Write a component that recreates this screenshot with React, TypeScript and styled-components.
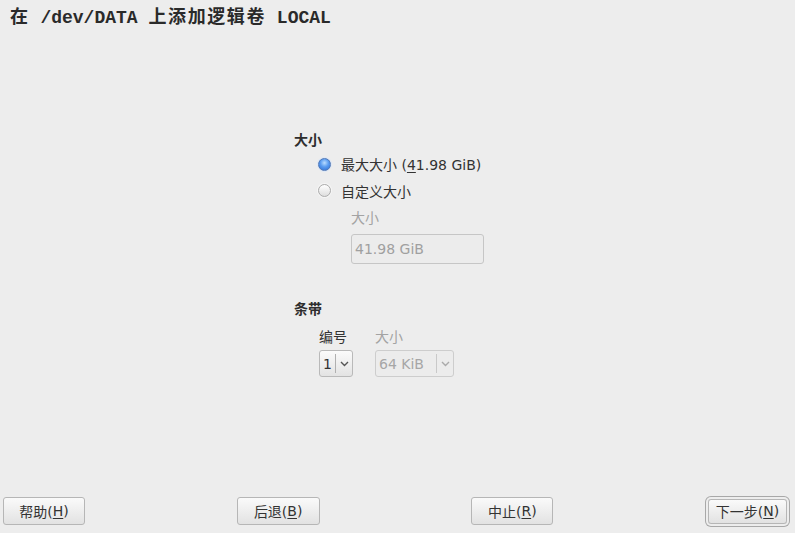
import React from 'react';
import styled, { createGlobalStyle } from 'styled-components';

const GlobalStyle = createGlobalStyle`
  html, body {
    margin: 0;
    padding: 0;
    background: #ededed;
  }
`

const Page = styled.div`
  width: 795px;
  height: 533px;
  display: flex;
  flex-direction: column;
  background: #ededed;
  color: #333;
  font-family: "DejaVu Sans", "Noto Sans CJK SC", sans-serif;
  font-size: 14px;
  overflow: hidden;
`

const Title = styled.h1`
  margin: 0;
  padding: 7px 0 0 10px;
  height: 22px;
  font-family: "Liberation Mono", "Noto Sans CJK SC", monospace;
  font-size: 18px;
  line-height: 22px;
  font-weight: bold;
  color: #2a2a2a;
  white-space: pre;
`

const Wide = styled.span`
  letter-spacing: 1.6px;
`

const Main = styled.div`
  flex: 1;
  padding: 101px 0 0 294px;
  display: flex;
  flex-direction: column;
`

const SectionTitle = styled.div<{ $gap?: number }>`
  margin-top: ${p => p.$gap || 0}px;
  line-height: 20px;
  font-weight: bold;
  color: #2e2e2e;
`

const Options = styled.div`
  padding-left: 24px;
  margin-top: 1px;
  display: flex;
  flex-direction: column;
`

const RadioRow = styled.label`
  height: 26.5px;
  display: flex;
  align-items: center;
  gap: 10px;
`

const Radio = styled.span<{ $checked?: boolean }>`
  width: 11px;
  height: 11px;
  border-radius: 50%;
  border: 1px solid ${p => (p.$checked ? '#4f78b8' : '#acacac')};
  background: ${p =>
    p.$checked
      ? 'radial-gradient(circle at 50% 35%, #b9dcff 0%, #5a9cf0 45%, #2d6cd0 100%)'
      : 'linear-gradient(#ffffff, #dedede)'};
  box-shadow: 0 0 0 1px ${p => (p.$checked ? '#dfe8f5' : '#f6f6f6')};
`

const SubField = styled.div`
  padding-left: 33px;
  margin-top: 4px;
  display: flex;
  flex-direction: column;
`

const Label = styled.div<{ $muted?: boolean }>`
  line-height: 20px;
  color: ${p => (p.$muted ? '#a3a3a3' : '#333')};
`

const TextInput = styled.div`
  margin-top: 6px;
  width: 128px;
  height: 28px;
  box-sizing: content-box;
  border: 1px solid #c6c6c6;
  border-radius: 3px;
  background: #ececec;
  color: #a0a0a0;
  display: flex;
  align-items: center;
  padding-left: 3px;
`

const StripeRow = styled.div`
  padding-left: 25px;
  margin-top: 8px;
  display: flex;
  gap: 22px;
`

const Field = styled.div`
  display: flex;
  flex-direction: column;
  gap: 3px;
`

const Select = styled.div<{ $width: number; $disabled?: boolean }>`
  width: ${p => p.$width}px;
  height: 27px;
  box-sizing: border-box;
  border: 1px solid ${p => (p.$disabled ? '#cdcdcd' : '#b9b9b9')};
  border-radius: 3px;
  background: ${p => (p.$disabled ? '#ececec' : 'linear-gradient(#fbfbfb, #e3e3e3)')};
  color: ${p => (p.$disabled ? '#a6a6a6' : '#333')};
  display: flex;
  align-items: center;
`

const SelectValue = styled.span`
  flex: 1;
  padding-left: 3px;
`

const SelectArrow = styled.span<{ $disabled?: boolean }>`
  width: 16px;
  height: 19px;
  border-left: 1px solid ${p => (p.$disabled ? '#c9c9c9' : '#b0b0b0')};
  display: flex;
  align-items: center;
  justify-content: center;
`

const Footer = styled.div`
  display: flex;
  justify-content: space-between;
  align-items: center;
  padding: 0 5px 8px 3px;
`

const Button = styled.button<{ $width: number; $default?: boolean }>`
  width: ${p => p.$width}px;
  height: ${p => (p.$default ? 25 : 28)}px;
  margin: ${p => (p.$default ? '0 3px' : '0')};
  border: 1px solid #b6b6b6;
  border-radius: 3px;
  background: linear-gradient(#fafafa, #e2e2e2);
  box-shadow: ${p => (p.$default ? '0 0 0 2px #ededed, 0 0 0 3px #a8a8a8' : 'none')};
  font-family: "DejaVu Sans", "Noto Sans CJK SC", sans-serif;
  font-size: 14px;
  color: #333;
  padding: 0;
  display: flex;
  align-items: center;
  justify-content: center;
`

const Key = styled.u`
  text-underline-offset: 2px;
`

function Chevron({ color }: { color: string }) {
  return (
    <svg width="9" height="6" viewBox="0 0 9 6">
      <path d="M1 1 L4.5 4.5 L8 1" fill="none" stroke={color} strokeWidth="1.4" />
    </svg>
  )
}

export default function App() {
  return (
    <Page>
      <GlobalStyle />
      <Title>
        <Wide>在</Wide> /dev/DATA <Wide>上添加逻辑卷</Wide> LOCAL
      </Title>

      <Main>
        <SectionTitle>大小</SectionTitle>
        <Options>
          <RadioRow>
            <Radio $checked />
            <span>最大大小 (<Key>4</Key>1.98 GiB)</span>
          </RadioRow>
          <RadioRow>
            <Radio />
            <span>自定义大小</span>
          </RadioRow>
          <SubField>
            <Label $muted>大小</Label>
            <TextInput>41.98 GiB</TextInput>
          </SubField>
        </Options>

        <SectionTitle $gap={35}>条带</SectionTitle>
        <StripeRow>
          <Field>
            <Label>编号</Label>
            <Select $width={34}>
              <SelectValue>1</SelectValue>
              <SelectArrow>
                <Chevron color="#555" />
              </SelectArrow>
            </Select>
          </Field>
          <Field>
            <Label $muted>大小</Label>
            <Select $width={79} $disabled>
              <SelectValue>64 KiB</SelectValue>
              <SelectArrow $disabled>
                <Chevron color="#aaa" />
              </SelectArrow>
            </Select>
          </Field>
        </StripeRow>
      </Main>

      <Footer>
        <Button $width={82}>帮助(<Key>H</Key>)</Button>
        <Button $width={83}>后退(<Key>B</Key>)</Button>
        <Button $width={82}>中止(<Key>R</Key>)</Button>
        <Button $width={79} $default>下一步(<Key>N</Key>)</Button>
      </Footer>
    </Page>
  )
}
